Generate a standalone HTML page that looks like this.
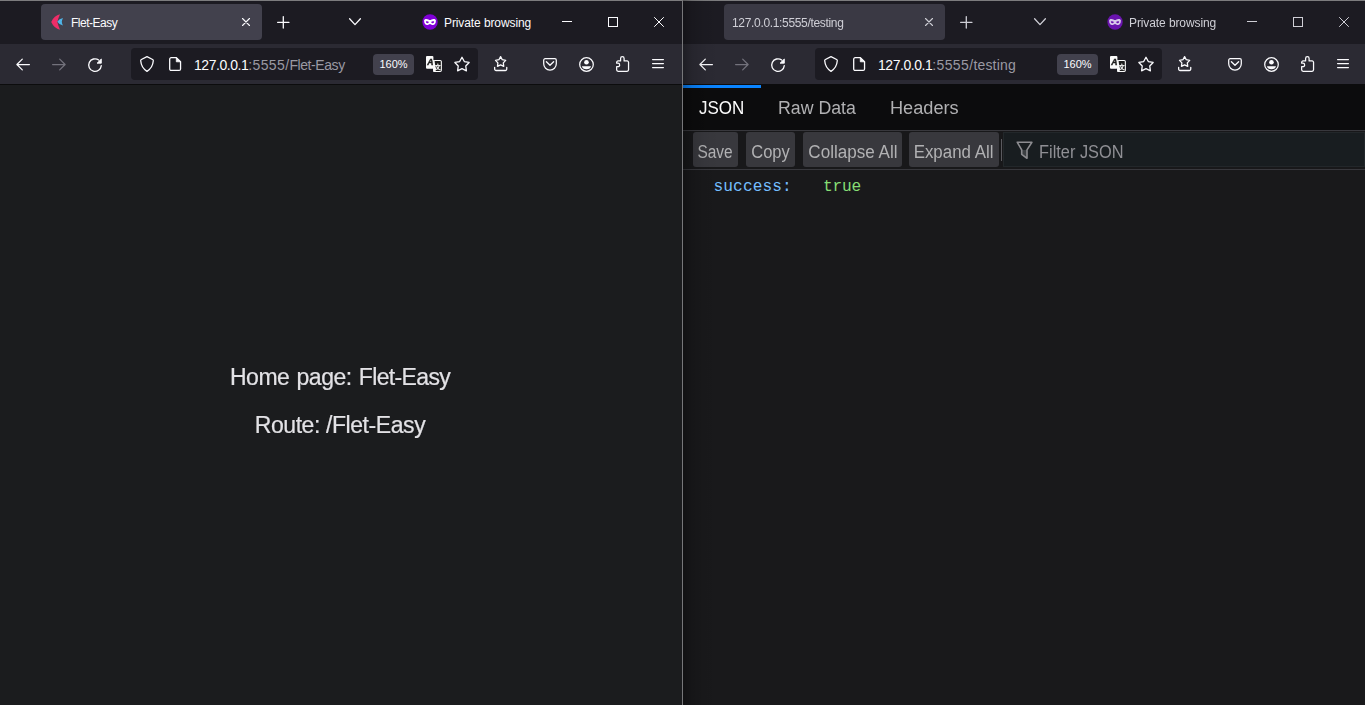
<!DOCTYPE html>
<html lang="en"><head><meta charset="utf-8"><title>Flet-Easy</title>
<style>
html,body{margin:0;padding:0;background:#1c1b22;}
body{width:1365px;height:705px;overflow:hidden;position:relative;font-family:"Liberation Sans","DejaVu Sans",sans-serif;}
.abs{position:absolute;}
.win{position:absolute;top:0;height:705px;overflow:hidden;}
.topline{position:absolute;left:0;top:0;height:1px;width:100%;background:#7c7c7e;}
.tabbar{position:absolute;left:0;top:1px;height:43px;width:100%;background:#1c1b22;}
.navbar{position:absolute;left:0;top:44px;height:40px;width:100%;background:#2b2a33;}
.navline{position:absolute;left:0;top:84px;height:1px;width:100%;background:#0c0c0d;}
.tab{position:absolute;top:4px;height:36px;width:221px;border-radius:4px;background:#42414d;}
.tabtitle{position:absolute;top:5px;height:36px;line-height:36px;font-size:12px;color:#fbfbfe;white-space:nowrap;}
.urlbar{position:absolute;top:48px;height:32px;border-radius:4px;background:#1c1b22;}
.url{position:absolute;top:49px;height:32px;line-height:32px;font-size:14px;color:#fbfbfe;white-space:nowrap;}
.url .dim{color:#9a99a3;}
.zoom{position:absolute;top:54px;height:21px;width:41px;border-radius:4px;background:#42414d;color:#fbfbfe;font-size:11px;line-height:21px;text-align:center;}
.pb{position:absolute;top:5px;letter-spacing:-0.1px;height:36px;line-height:36px;font-size:12px;color:#fbfbfe;white-space:nowrap;}
svg{position:absolute;overflow:visible;}
.ic{fill:none;stroke:#fbfbfe;stroke-width:1.25;stroke-linecap:round;stroke-linejoin:round;}
.content{position:absolute;left:0;top:85px;width:100%;height:620px;}

.jt{top:3px;height:42px;line-height:40px;font-size:19.2px;color:#b1b1b3;white-space:nowrap;}
.jb{top:47px;height:35px;line-height:40px;overflow:hidden;font-size:17.6px;color:#b1b1b3;background:#38383d;border-radius:3px;text-align:center;white-space:nowrap;}
.mono{font-family:"Liberation Mono","DejaVu Sans Mono",monospace;font-size:16.2px;line-height:26px;height:26px;white-space:nowrap;}
</style></head>
<body>
<div class="win" id="wr" style="left:683px;width:682px">
<div class="topline"></div><div class="tabbar"></div><div class="navbar"></div><div class="navline"></div>
<div class="tab" style="left:41px;background:#3a3944"></div>
<div class="tabtitle" style="left:49px;color:#cfcfd6;will-change:transform"><span style="letter-spacing:-0.33px">127.0.0.1:5555/testing</span></div>
<svg style="left:242px;top:18px;" width="8" height="8" viewBox="0 0 8 8"><path d="M0.5 0.5L7.5 7.5M7.5 0.5L0.5 7.5" stroke="#cfcfd6" stroke-width="1.1" fill="none" stroke-linecap="round"/></svg>
<svg style="left:277.25px;top:16.3px;" width="12.6" height="12.6" viewBox="0 0 12.6 12.6"><path d="M6.3 0.6V12M0.6 6.3H12" stroke="#cfcfd6" stroke-width="1.3" fill="none" stroke-linecap="round"/></svg>
<svg style="left:351px;top:18px;" width="12" height="8" viewBox="0 0 12 8"><path d="M0.6 0.8L6 6.6L11.4 0.8" stroke="#cfcfd6" stroke-width="1.3" fill="none" stroke-linecap="round" stroke-linejoin="round"/></svg>
<svg style="left:424px;top:14px;" width="16" height="16" viewBox="0 0 16 16"><circle cx="8.05" cy="8" r="7.7" fill="#6a14ae"/><path d="M2.1 6.6C2.1 5.5 3 5 4.4 5C6 5 7 6.1 8 6.1C9 6.1 10 5 11.6 5C13 5 13.9 5.5 13.9 6.6C13.9 9.4 12.7 11.1 10.9 11.1C9.5 11.1 8.9 9.9 8 9.9C7.1 9.9 6.5 11.1 5.1 11.1C3.3 11.1 2.1 9.4 2.1 6.6Z" fill="#d9c9ea"/><path d="M3.9 7.5C4.6 7.1 6.2 7.2 6.9 7.9C6.6 8.8 5.9 9.2 5.2 9.2C4.4 9.2 3.9 8.5 3.9 7.5Z" fill="#6a14ae"/><path d="M12.1 7.5C11.4 7.1 9.8 7.2 9.1 7.9C9.4 8.8 10.1 9.2 10.8 9.2C11.6 9.2 12.1 8.5 12.1 7.5Z" fill="#6a14ae"/></svg>
<div class="pb" style="left:446px;color:#cfcfd6;will-change:transform">Private browsing</div>
<div class="abs" style="left:564px;top:21px;width:10px;height:1px;background:#cfcfd6"></div>
<div class="abs" style="left:610px;top:17px;width:8px;height:8px;border:1px solid #cfcfd6"></div>
<svg style="left:656px;top:17px;" width="10" height="10" viewBox="0 0 10 10"><path d="M0.2 0.2L9.8 9.8M9.8 0.2L0.2 9.8" stroke="#cfcfd6" stroke-width="1" fill="none"/></svg>
<svg style="left:16px;top:58px;" width="14" height="13" viewBox="0 0 14 13"><path class="ic" d="M13.4 6.5H1.2M6.3 1.1L0.9 6.5L6.3 11.9"/></svg>
<svg style="left:52px;top:58px;" width="14" height="13" viewBox="0 0 14 13"><path class="ic" style="stroke:#73727c" d="M0.6 6.5H12.8M7.7 1.1L13.1 6.5L7.7 11.9"/></svg>
<svg style="left:88px;top:58px;" width="14" height="14" viewBox="0 0 14 14"><path class="ic" style="stroke-width:1.3" d="M13.28 7.65A6.3 6.3 0 1 1 10.7 2.0"/><path d="M13.3 1V5.2H9.1Z" fill="#fbfbfe" stroke="#fbfbfe" stroke-width="0.9" stroke-linejoin="round"/></svg>
<div class="urlbar" style="left:132px;width:347px"></div>
<svg style="left:141px;top:56px;" width="14" height="16" viewBox="0 0 14 16"><path class="ic" style="stroke-width:1.3" d="M7 0.7L12.6 3.5Q13.4 3.9 13.3 4.8C12.9 9.6 10.6 13.1 7 15.4C3.4 13.1 1.1 9.6 0.7 4.8Q0.6 3.9 1.4 3.5Z"/></svg>
<svg style="left:170px;top:57px;" width="13" height="14" viewBox="0 0 13 14"><path class="ic" style="stroke-width:1.3" d="M2.2 0.65H7.4L11.55 4.6V11.9A1.5 1.5 0 0 1 10.05 13.4H2.2A1.5 1.5 0 0 1 0.7 11.9V2.15A1.5 1.5 0 0 1 2.2 0.65Z"/><path d="M7.3 0.8V4.8H11.4Z" fill="#fbfbfe" stroke="#fbfbfe" stroke-width="0.8" stroke-linejoin="round"/></svg>
<div class="url" style="left:195px"><span style="letter-spacing:-0.45px">127.0.0.1</span><span class="dim"><span style="letter-spacing:0.35px">:5555/</span><span style="letter-spacing:0.18px">testing</span></span></div>
<div class="zoom" style="left:374px">160%</div>
<svg style="left:427px;top:56px;filter:grayscale(1)" width="16" height="16" viewBox="0 0 16 16"><rect x="7.75" y="4.5" width="7.6" height="10.95" rx="1.1" fill="#1c1b22" stroke="#fbfbfe" stroke-width="1.1"/><path d="M7.1 4H8.1L10.1 13.1L9.2 16H7.9A0.8 0.8 0 0 1 7.1 15.2Z" fill="#fbfbfe"/><rect x="0" y="0" width="7.4" height="12.7" rx="1" fill="#fbfbfe"/><text x="4.4" y="9.3" font-size="8.6" font-weight="bold" font-style="italic" text-anchor="middle" fill="#1c1b22" stroke="#1c1b22" stroke-width="0.45" font-family="Liberation Sans, sans-serif">A</text><text x="11.75" y="12.7" font-size="5.6" font-weight="bold" stroke="#fbfbfe" stroke-width="0.15" text-anchor="middle" fill="#fbfbfe" font-family="Liberation Sans, Noto Sans CJK SC, sans-serif">文</text></svg>
<svg style="left:455px;top:56px;" width="16" height="16" viewBox="0 0 16 16"><path class="ic" style="stroke-width:1.3" d="M8.00 1.25L10.32 5.55L15.13 6.43L11.76 9.97L12.41 14.82L8.00 12.70L3.59 14.82L4.24 9.97L0.87 6.43L5.68 5.55Z"/></svg>
<svg style="left:495px;top:56px;" width="14" height="15.5" viewBox="0 0 14 15.5"><path class="ic" style="stroke-width:1.3" d="M6.60 0.65L8.28 3.69L11.69 4.35L9.31 6.88L9.74 10.33L6.60 8.85L3.46 10.33L3.89 6.88L1.51 4.35L4.92 3.69Z"/><path class="ic" style="stroke-width:1.3" d="M0.65 11.3V13.1A1.4 1.4 0 0 0 2.05 14.5H11.35A1.4 1.4 0 0 0 12.75 13.1V11.3"/></svg>
<svg style="left:545px;top:58px;" width="14" height="13" viewBox="0 0 14 13"><path class="ic" d="M2.2 0.7H11.8A1.5 1.5 0 0 1 13.3 2.2V5.8A6.3 6.3 0 0 1 0.7 5.8V2.2A1.5 1.5 0 0 1 2.2 0.7Z"/><path class="ic" style="stroke-width:1.35" d="M3.4 3.8L7 7.2L10.6 3.8"/></svg>
<svg style="left:581px;top:57px;" width="15" height="15" viewBox="0 0 15 15"><circle class="ic" cx="7.5" cy="7.5" r="6.8"/><circle cx="7.45" cy="5.3" r="2.3" fill="#fbfbfe"/><path d="M2.9 9.3H12A4.6 3.5 0 0 1 2.9 9.3Z" fill="#fbfbfe"/></svg>
<svg style="left:618px;top:56px;" width="13.5" height="16" viewBox="0 0 13.5 16"><path class="ic" d="M4.6 4.9V2.4A1.75 1.75 0 0 1 8.1 2.4V4.9H11.1A1.45 1.45 0 0 1 12.55 6.35V13.85A1.45 1.45 0 0 1 11.1 15.3H2.1A1.45 1.45 0 0 1 0.65 13.85V10.7H1.9A1.75 1.75 0 0 0 1.9 7.2H0.65V6.35A1.45 1.45 0 0 1 2.1 4.9Z"/></svg>
<svg style="left:654px;top:59px;" width="12" height="10" viewBox="0 0 12 10"><path class="ic" style="stroke-width:1.3" d="M0.6 0.6H11.4M0.6 4.6H11.4M0.6 8.6H11.4"/></svg>
<div class="content" style="background:#19191b">
<div class="abs" style="left:0;top:0;width:100%;height:45px;background:#0c0c0d"></div>
<div class="abs" style="left:0;top:0;width:78px;height:3px;background:#0a84ff"></div>
<div class="abs jt" style="left:16px;color:#ffffff"><span style="display:inline-block;transform:scaleX(0.885);transform-origin:0 50%">JSON</span></div>
<div class="abs jt" style="left:95px"><span style="display:inline-block;transform:scaleX(0.925);transform-origin:0 50%">Raw Data</span></div>
<div class="abs jt" style="left:207px"><span style="display:inline-block;transform:scaleX(0.947);transform-origin:0 50%">Headers</span></div>
<div class="abs" style="left:0;top:45px;width:100%;height:1px;background:#38383d"></div>
<div class="abs" style="left:0;top:46px;width:100%;height:38px;background:#18181a"></div>
<div class="abs" style="left:0;top:84px;width:100%;height:1px;background:#38383d"></div>
<div class="abs jb" style="left:10px;width:45px"><span style="display:inline-block;transform:scaleX(0.88);transform-origin:50% 50%">Save</span></div>
<div class="abs jb" style="left:63px;width:49px"><span style="display:inline-block;transform:scaleX(0.94);transform-origin:50% 50%">Copy</span></div>
<div class="abs jb" style="left:120px;width:99px"><span style="display:inline-block;transform:scaleX(0.971);transform-origin:50% 50%">Collapse All</span></div>
<div class="abs jb" style="left:226px;width:90px"><span style="display:inline-block;transform:scaleX(0.96);transform-origin:50% 50%">Expand All</span></div>
<div class="abs" style="left:318px;top:54px;width:1px;height:22px;background:#5a5a5f"></div>
<div class="abs" style="left:320px;top:47px;width:362px;height:35px;background:#181d20;border:1px solid #22272a;box-sizing:border-box"></div>
<svg style="left:333px;top:56.4px" width="17" height="19" viewBox="0 0 17 19"><path d="M5.7 8.9H11V17.3L5.7 13.3Z" fill="#3b3f42"/><path d="M1.3 1.3H15.9L11 8.9V17.3L5.7 13.3V8.9Z" fill="none" stroke="#8c8c90" stroke-width="1.6" stroke-linejoin="round"/></svg>
<div class="abs" style="left:356px;top:47px;height:35px;line-height:40px;font-size:17.6px;color:#8f8f94;white-space:nowrap"><span style="display:inline-block;transform:scaleX(0.93);transform-origin:0 50%">Filter JSON</span></div>
<div class="abs mono" style="left:30.5px;top:89px;letter-spacing:0.08px;color:#75bfff">success:</div>
<div class="abs mono" style="left:140px;top:89px;color:#86de74;letter-spacing:-0.2px">true</div>
</div>
<div class="abs" style="left:0;top:0;width:36px;height:705px;background:linear-gradient(to right,rgba(0,0,0,0.3),rgba(0,0,0,0.12) 25%,rgba(0,0,0,0.04) 60%,rgba(0,0,0,0))"></div>
</div>
<div class="win" id="wl" style="left:0;width:682px">
<div class="topline"></div><div class="tabbar"></div><div class="navbar"></div><div class="navline"></div>
<div class="tab" style="left:41px;background:#42414d"></div>
<svg style="left:51px;top:14px;" width="13" height="16" viewBox="0 0 13 16"><path d="M9 0.3Q3.3 1.4 0.2 8Q3.3 14.6 9 15.7Q7.2 11.6 6.3 8Q7.2 4.4 9 0.3Z" fill="#ee2d68"/><path d="M12 3.9Q8.2 4.6 6.3 7.8Q8.2 10.9 12 11.5Q10.9 9.6 10.8 7.7Q10.9 5.8 12 3.9Z" fill="#4fb5e8"/></svg>
<div class="tabtitle" style="left:71px;color:#fbfbfe"><span style="letter-spacing:-0.5px">Flet-Easy</span></div>
<svg style="left:242px;top:18px;" width="8" height="8" viewBox="0 0 8 8"><path d="M0.5 0.5L7.5 7.5M7.5 0.5L0.5 7.5" stroke="#fbfbfe" stroke-width="1.1" fill="none" stroke-linecap="round"/></svg>
<svg style="left:277.25px;top:16.3px;" width="12.6" height="12.6" viewBox="0 0 12.6 12.6"><path d="M6.3 0.6V12M0.6 6.3H12" stroke="#fbfbfe" stroke-width="1.3" fill="none" stroke-linecap="round"/></svg>
<svg style="left:349px;top:18px;" width="12" height="8" viewBox="0 0 12 8"><path d="M0.6 0.8L6 6.6L11.4 0.8" stroke="#fbfbfe" stroke-width="1.3" fill="none" stroke-linecap="round" stroke-linejoin="round"/></svg>
<svg style="left:422px;top:14px;" width="16" height="16" viewBox="0 0 16 16"><circle cx="8.05" cy="8" r="7.7" fill="#8000d7"/><path d="M2.1 6.6C2.1 5.5 3 5 4.4 5C6 5 7 6.1 8 6.1C9 6.1 10 5 11.6 5C13 5 13.9 5.5 13.9 6.6C13.9 9.4 12.7 11.1 10.9 11.1C9.5 11.1 8.9 9.9 8 9.9C7.1 9.9 6.5 11.1 5.1 11.1C3.3 11.1 2.1 9.4 2.1 6.6Z" fill="#ffffff"/><path d="M3.9 7.5C4.6 7.1 6.2 7.2 6.9 7.9C6.6 8.8 5.9 9.2 5.2 9.2C4.4 9.2 3.9 8.5 3.9 7.5Z" fill="#8000d7"/><path d="M12.1 7.5C11.4 7.1 9.8 7.2 9.1 7.9C9.4 8.8 10.1 9.2 10.8 9.2C11.6 9.2 12.1 8.5 12.1 7.5Z" fill="#8000d7"/></svg>
<div class="pb" style="left:444px;color:#fbfbfe">Private browsing</div>
<div class="abs" style="left:562px;top:21px;width:10px;height:1px;background:#fbfbfe"></div>
<div class="abs" style="left:608px;top:17px;width:8px;height:8px;border:1px solid #fbfbfe"></div>
<svg style="left:654px;top:17px;" width="10" height="10" viewBox="0 0 10 10"><path d="M0.2 0.2L9.8 9.8M9.8 0.2L0.2 9.8" stroke="#fbfbfe" stroke-width="1" fill="none"/></svg>
<svg style="left:16px;top:58px;" width="14" height="13" viewBox="0 0 14 13"><path class="ic" d="M13.4 6.5H1.2M6.3 1.1L0.9 6.5L6.3 11.9"/></svg>
<svg style="left:52px;top:58px;" width="14" height="13" viewBox="0 0 14 13"><path class="ic" style="stroke:#73727c" d="M0.6 6.5H12.8M7.7 1.1L13.1 6.5L7.7 11.9"/></svg>
<svg style="left:88px;top:58px;" width="14" height="14" viewBox="0 0 14 14"><path class="ic" style="stroke-width:1.3" d="M13.28 7.65A6.3 6.3 0 1 1 10.7 2.0"/><path d="M13.3 1V5.2H9.1Z" fill="#fbfbfe" stroke="#fbfbfe" stroke-width="0.9" stroke-linejoin="round"/></svg>
<div class="urlbar" style="left:131px;width:347px"></div>
<svg style="left:140px;top:56px;" width="14" height="16" viewBox="0 0 14 16"><path class="ic" style="stroke-width:1.3" d="M7 0.7L12.6 3.5Q13.4 3.9 13.3 4.8C12.9 9.6 10.6 13.1 7 15.4C3.4 13.1 1.1 9.6 0.7 4.8Q0.6 3.9 1.4 3.5Z"/></svg>
<svg style="left:169px;top:57px;" width="13" height="14" viewBox="0 0 13 14"><path class="ic" style="stroke-width:1.3" d="M2.2 0.65H7.4L11.55 4.6V11.9A1.5 1.5 0 0 1 10.05 13.4H2.2A1.5 1.5 0 0 1 0.7 11.9V2.15A1.5 1.5 0 0 1 2.2 0.65Z"/><path d="M7.3 0.8V4.8H11.4Z" fill="#fbfbfe" stroke="#fbfbfe" stroke-width="0.8" stroke-linejoin="round"/></svg>
<div class="url" style="left:194px"><span style="letter-spacing:-0.45px">127.0.0.1</span><span class="dim"><span style="letter-spacing:0.35px">:5555/</span><span style="letter-spacing:-0.42px">Flet-Easy</span></span></div>
<div class="zoom" style="left:373px">160%</div>
<svg style="left:426px;top:56px;filter:grayscale(1)" width="16" height="16" viewBox="0 0 16 16"><rect x="7.75" y="4.5" width="7.6" height="10.95" rx="1.1" fill="#1c1b22" stroke="#fbfbfe" stroke-width="1.1"/><path d="M7.1 4H8.1L10.1 13.1L9.2 16H7.9A0.8 0.8 0 0 1 7.1 15.2Z" fill="#fbfbfe"/><rect x="0" y="0" width="7.4" height="12.7" rx="1" fill="#fbfbfe"/><text x="4.4" y="9.3" font-size="8.6" font-weight="bold" font-style="italic" text-anchor="middle" fill="#1c1b22" stroke="#1c1b22" stroke-width="0.45" font-family="Liberation Sans, sans-serif">A</text><text x="11.75" y="12.7" font-size="5.6" font-weight="bold" stroke="#fbfbfe" stroke-width="0.15" text-anchor="middle" fill="#fbfbfe" font-family="Liberation Sans, Noto Sans CJK SC, sans-serif">文</text></svg>
<svg style="left:454px;top:56px;" width="16" height="16" viewBox="0 0 16 16"><path class="ic" style="stroke-width:1.3" d="M8.00 1.25L10.32 5.55L15.13 6.43L11.76 9.97L12.41 14.82L8.00 12.70L3.59 14.82L4.24 9.97L0.87 6.43L5.68 5.55Z"/></svg>
<svg style="left:494px;top:56px;" width="14" height="15.5" viewBox="0 0 14 15.5"><path class="ic" style="stroke-width:1.3" d="M6.60 0.65L8.28 3.69L11.69 4.35L9.31 6.88L9.74 10.33L6.60 8.85L3.46 10.33L3.89 6.88L1.51 4.35L4.92 3.69Z"/><path class="ic" style="stroke-width:1.3" d="M0.65 11.3V13.1A1.4 1.4 0 0 0 2.05 14.5H11.35A1.4 1.4 0 0 0 12.75 13.1V11.3"/></svg>
<svg style="left:543px;top:58px;" width="14" height="13" viewBox="0 0 14 13"><path class="ic" d="M2.2 0.7H11.8A1.5 1.5 0 0 1 13.3 2.2V5.8A6.3 6.3 0 0 1 0.7 5.8V2.2A1.5 1.5 0 0 1 2.2 0.7Z"/><path class="ic" style="stroke-width:1.35" d="M3.4 3.8L7 7.2L10.6 3.8"/></svg>
<svg style="left:579px;top:57px;" width="15" height="15" viewBox="0 0 15 15"><circle class="ic" cx="7.5" cy="7.5" r="6.8"/><circle cx="7.45" cy="5.3" r="2.3" fill="#fbfbfe"/><path d="M2.9 9.3H12A4.6 3.5 0 0 1 2.9 9.3Z" fill="#fbfbfe"/></svg>
<svg style="left:616px;top:56px;" width="13.5" height="16" viewBox="0 0 13.5 16"><path class="ic" d="M4.6 4.9V2.4A1.75 1.75 0 0 1 8.1 2.4V4.9H11.1A1.45 1.45 0 0 1 12.55 6.35V13.85A1.45 1.45 0 0 1 11.1 15.3H2.1A1.45 1.45 0 0 1 0.65 13.85V10.7H1.9A1.75 1.75 0 0 0 1.9 7.2H0.65V6.35A1.45 1.45 0 0 1 2.1 4.9Z"/></svg>
<svg style="left:652px;top:59px;" width="12" height="10" viewBox="0 0 12 10"><path class="ic" style="stroke-width:1.3" d="M0.6 0.6H11.4M0.6 4.6H11.4M0.6 8.6H11.4"/></svg>
<div class="content" style="background:#1b1c1e">
<div class="abs" id="l1" style="left:0;width:680px;top:276px;letter-spacing:-0.45px;will-change:transform;text-align:center;font-size:23px;line-height:32px;color:#e3e2e6;-webkit-text-stroke:0.2px #e3e2e6;word-spacing:1.1px;white-space:nowrap">Home page: <span style="letter-spacing:-0.65px">Flet-Easy</span></div>
<div class="abs" id="l2" style="left:0;width:680px;top:324px;letter-spacing:-0.42px;will-change:transform;text-align:center;font-size:23px;line-height:32px;color:#e3e2e6;-webkit-text-stroke:0.2px #e3e2e6;white-space:nowrap">Route: /Flet-Easy</div>
</div>
</div>
<div class="abs" style="left:682px;top:0;width:1px;height:705px;background:#77777a"></div>
</body></html>
